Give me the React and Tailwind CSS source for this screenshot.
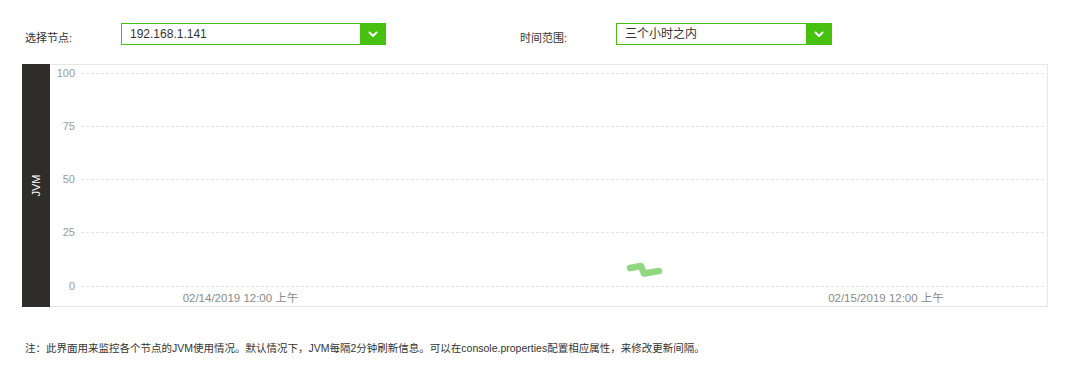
import React from "react";

const FONT = { fontFamily: '"Liberation Sans", Arial, "Noto Sans CJK SC", sans-serif' };

function Chevron() {
  return (
    <svg width="10" height="7" viewBox="0 0 10 7">
      <path d="M1.5 1.5 L5 5 L8.5 1.5" fill="none" stroke="#fff" strokeWidth="2" strokeLinecap="round" strokeLinejoin="round" />
    </svg>
  );
}

function Select({ value, width }) {
  return (
    <div className={`flex h-[22px] border border-[#47c10f] bg-white ${width}`}>
      <div className="flex-1 pl-[8px] text-[12px] leading-[20px] text-[#333]">{value}</div>
      <div className="w-[25px] h-full bg-[#47c10f] flex items-center justify-center">
        <Chevron />
      </div>
    </div>
  );
}

function Chart() {
  const ys = [0, 1, 2, 3, 4].map((i) => 7.5 + i * 53.25);
  const labels = ["100", "75", "50", "25", "0"];
  return (
    <svg width="997" height="241" className="block">
      {ys.map((y, i) => (
        <g key={i}>
          <line x1="31" x2="995" y1={Math.round(y) + 0.5} y2={Math.round(y) + 0.5} stroke="#e3e3e3" strokeDasharray="3 2" />
          <text x="25" y={Math.round(y) + 4} textAnchor="end" fontSize="11" fill="#9a9a9a" style={FONT}>
            {labels[i]}
          </text>
        </g>
      ))}
      <text x="190.5" y="237" textAnchor="middle" fontSize="11.5" fill="#8a8a8a" style={FONT}>
        02/14/2019 12:00 上午
      </text>
      <text x="836" y="237" textAnchor="middle" fontSize="11.5" fill="#8a8a8a" style={FONT}>
        02/15/2019 12:00 上午
      </text>
      <path
        d="M580 203 L591 201 L594 208.5 L609 206"
        fill="none"
        stroke="#8fd87f"
        strokeWidth="6.5"
        strokeLinecap="round"
        strokeLinejoin="round"
      />
    </svg>
  );
}

export default function App() {
  return (
    <div className="w-[1075px] h-[367px] bg-white overflow-hidden" style={FONT}>
      <div className="flex pt-[23px]">
        <div className="w-[121px] pl-[25px] pt-[8px] text-[11px] leading-[14px] text-[#333]">选择节点:</div>
        <Select value="192.168.1.141" width="w-[265px]" />
        <div className="ml-[134px] w-[96px] pt-[8px] text-[11px] leading-[14px] text-[#333]">时间范围:</div>
        <Select value="三个小时之内" width="w-[216px]" />
      </div>
      <div className="mt-[19px] ml-[22px] w-[1026px] h-[243px] flex">
        <div className="w-[28px] h-full bg-[#2e2d2a] flex items-center justify-center">
          <div className="-rotate-90 text-white text-[11px] leading-none whitespace-nowrap">JVM</div>
        </div>
        <div className="flex-1 border-t border-b border-r border-[#e6e6e6]">
          <Chart />
        </div>
      </div>
      <div className="pl-[25px] mt-[34px] text-[10.5px] leading-[14px] text-[#333]">
        注：此界面用来监控各个节点的JVM使用情况。默认情况下，JVM每隔2分钟刷新信息。可以在console.properties配置相应属性，来修改更新间隔。
      </div>
    </div>
  );
}
